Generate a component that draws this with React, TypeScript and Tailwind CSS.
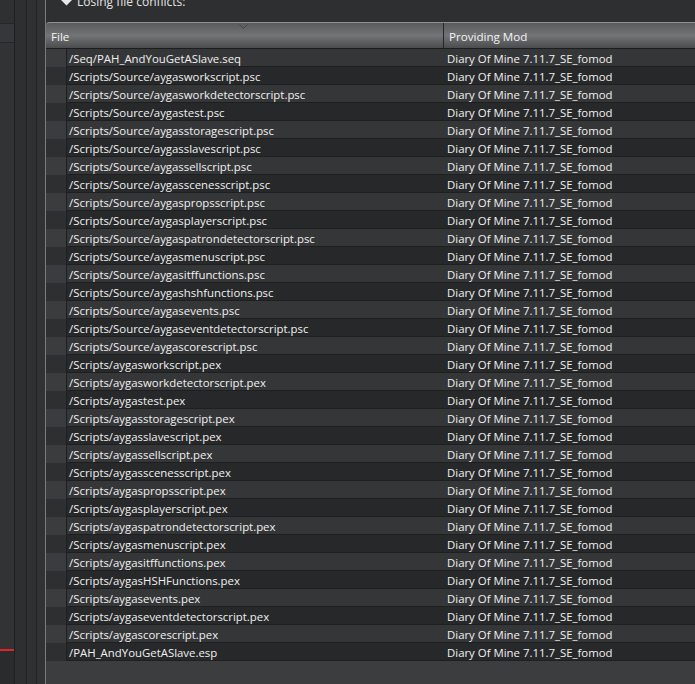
import React from "react";

const files = [
  "/Seq/PAH_AndYouGetASlave.seq",
  "/Scripts/Source/aygasworkscript.psc",
  "/Scripts/Source/aygasworkdetectorscript.psc",
  "/Scripts/Source/aygastest.psc",
  "/Scripts/Source/aygasstoragescript.psc",
  "/Scripts/Source/aygasslavescript.psc",
  "/Scripts/Source/aygassellscript.psc",
  "/Scripts/Source/aygasscenesscript.psc",
  "/Scripts/Source/aygaspropsscript.psc",
  "/Scripts/Source/aygasplayerscript.psc",
  "/Scripts/Source/aygaspatrondetectorscript.psc",
  "/Scripts/Source/aygasmenuscript.psc",
  "/Scripts/Source/aygasitffunctions.psc",
  "/Scripts/Source/aygashshfunctions.psc",
  "/Scripts/Source/aygasevents.psc",
  "/Scripts/Source/aygaseventdetectorscript.psc",
  "/Scripts/Source/aygascorescript.psc",
  "/Scripts/aygasworkscript.pex",
  "/Scripts/aygasworkdetectorscript.pex",
  "/Scripts/aygastest.pex",
  "/Scripts/aygasstoragescript.pex",
  "/Scripts/aygasslavescript.pex",
  "/Scripts/aygassellscript.pex",
  "/Scripts/aygasscenesscript.pex",
  "/Scripts/aygaspropsscript.pex",
  "/Scripts/aygasplayerscript.pex",
  "/Scripts/aygaspatrondetectorscript.pex",
  "/Scripts/aygasmenuscript.pex",
  "/Scripts/aygasitffunctions.pex",
  "/Scripts/aygasHSHFunctions.pex",
  "/Scripts/aygasevents.pex",
  "/Scripts/aygaseventdetectorscript.pex",
  "/Scripts/aygascorescript.pex",
  "/PAH_AndYouGetASlave.esp",
];

const MOD = "Diary Of Mine 7.11.7_SE_fomod";

const LeftStrip = () => {
  return (
    <div className="flex h-full shrink-0">
      <div className="flex w-[14px] flex-col bg-[#333436]">
        <div className="h-[24px] border-b border-[#262729] bg-[#2f3032]" />
        <div className="h-[19px] border-b border-[#262729] bg-[#36373a]" />
        <div className="h-[606px] bg-[#323335]" />
        <div className="h-[2px] bg-[#e0242a]" />
        <div className="flex-1 bg-[#2a2b2d]" />
      </div>
      <div className="w-[1px] bg-[#1f2022]" />
      <div className="w-[11px] bg-[#2e2f31]" />
      <div className="w-[1px] bg-[#222325]" />
      <div className="w-[9px] bg-[#2f3032]" />
      <div className="w-[1px] bg-[#222325]" />
      <div className="w-[8px] bg-[#313234]" />
      <div className="w-[1px] bg-[#7a7b7d]" />
    </div>
  );
};

const Header = () => {
  return (
    <div className="relative flex h-[27px] shrink-0 rounded-tl-[4px] border-t border-b border-t-[#8e8f91] border-b-[#1c1d1f] bg-linear-to-b from-[#5a5b5d] via-[#737476] to-[#4b4c4e] text-[11.6px] text-[#f4f4f4]">
      <div className="flex w-[397px] shrink-0 items-center pl-[5px] pt-[2px]">File</div>
      <div className="w-[1px] bg-[#252628]" />
      <div className="flex flex-1 items-center pl-[5px] pt-[2px]">Providing Mod</div>
      <svg
        className="absolute left-[193px] top-[1px]"
        width="9"
        height="5"
        viewBox="0 0 9 5"
      >
        <path d="M0.5 0.5 L4.5 4.5 L8.5 0.5" fill="none" stroke="#44454a" strokeWidth="1" />
      </svg>
    </div>
  );
};

const Row = ({ name, index }: { name: string; index: number }) => {
  const odd = index % 2 === 0;
  return (
    <div className="flex h-[18px]">
      <div className={`w-[20px] shrink-0 ${odd ? "bg-[#3b3c3e]" : "bg-[#2e2f31]"}`} />
      <div className="w-[1px] bg-[#1e1f21]" />
      <div
        className={`flex flex-1 items-center border-b border-[#1e1f21] pt-[2px] text-[11.4px] text-[#f0f0f0] ${
          odd ? "bg-[#353638]" : "bg-[#27282a]"
        }`}
      >
        <div className="w-[376px] shrink-0 whitespace-nowrap pl-[2px]">{name}</div>
        <div className="whitespace-nowrap pl-[4px]">{MOD}</div>
      </div>
    </div>
  );
};

const App = () => {
  return (
    <div
      className="flex h-[684px] w-[695px] overflow-hidden bg-[#2e2f31]"
      style={{ fontFamily: '"Open Sans", "Noto Sans", sans-serif' }}
    >
      <LeftStrip />
      <div className="flex min-w-0 flex-1 flex-col">
        <div className="flex h-[22px] shrink-0 items-start bg-[#2e2f31] pl-[15px] text-[12px] text-[#e4e4e4]">
          <svg width="11" height="6" viewBox="0 0 11 6">
            <path d="M0 0 L11 0 L5.5 5.5 Z" fill="#e8e8e8" />
          </svg>
          <div className="-mt-[6px] ml-[5px] leading-[16px]">Losing file conflicts:</div>
        </div>
        <div className="flex flex-1 flex-col bg-[#3c3d3f]">
          <Header />
          {files.map((f, i) => (
            <Row key={i} name={f} index={i} />
          ))}
        </div>
      </div>
    </div>
  );
};

export default App;
